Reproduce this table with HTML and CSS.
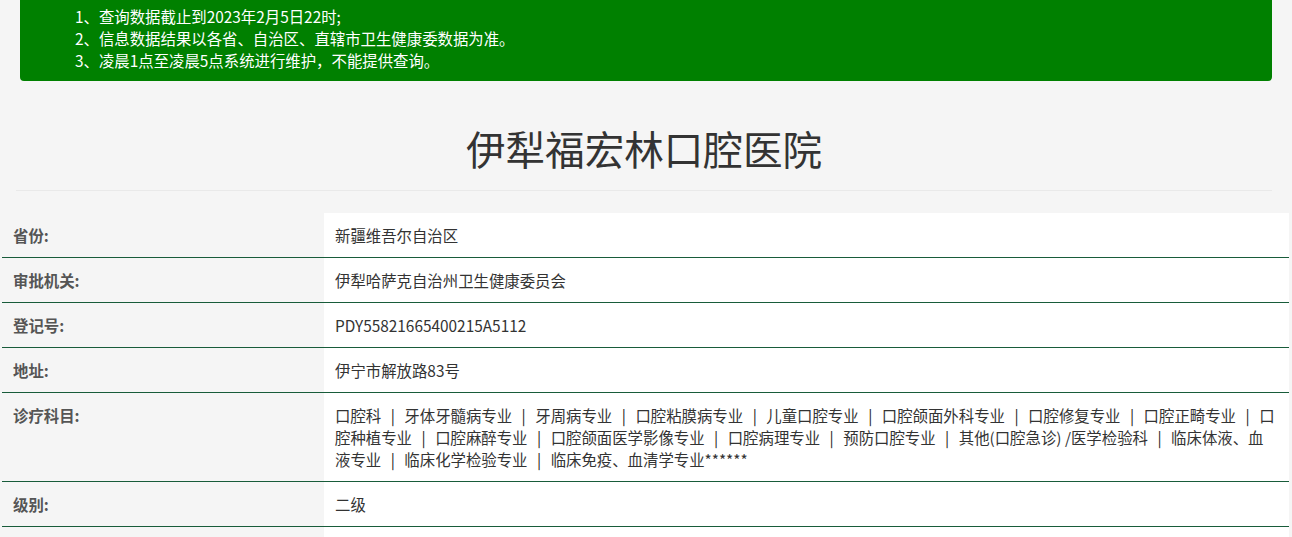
FILE: index.html
```html
<!DOCTYPE html>
<html lang="zh-CN">
<head>
<meta charset="utf-8">
<title>伊犁福宏林口腔医院</title>
<link rel="stylesheet" href="styles.css">
</head>
<body>
<div class="notice">
  <p>1、查询数据截止到2023年2月5日22时;</p>
  <p>2、信息数据结果以各省、自治区、直辖市卫生健康委数据为准。</p>
  <p>3、凌晨1点至凌晨5点系统进行维护，不能提供查询。</p>
</div>
<div class="header">
  <h1 class="title">伊犁福宏林口腔医院</h1>
</div>
<div class="info">
  <div class="row"><div class="label">省份:</div><div class="value">新疆维吾尔自治区</div></div>
  <div class="row"><div class="label">审批机关:</div><div class="value">伊犁哈萨克自治州卫生健康委员会</div></div>
  <div class="row"><div class="label">登记号:</div><div class="value">PDY55821665400215A5112</div></div>
  <div class="row"><div class="label">地址:</div><div class="value">伊宁市解放路83号</div></div>
  <div class="row"><div class="label">诊疗科目:</div><div class="value">口腔科<span class="sep">|</span>牙体牙髓病专业<span class="sep">|</span>牙周病专业<span class="sep">|</span>口腔粘膜病专业<span class="sep">|</span>儿童口腔专业<span class="sep">|</span>口腔颌面外科专业<span class="sep">|</span>口腔修复专业<span class="sep">|</span>口腔正畸专业<span class="sep">|</span>口腔种植专业<span class="sep">|</span>口腔麻醉专业<span class="sep">|</span>口腔颌面医学影像专业<span class="sep">|</span>口腔病理专业<span class="sep">|</span>预防口腔专业<span class="sep">|</span>其他(口腔急诊) /医学检验科<span class="sep">|</span>临床体液、血液专业<span class="sep">|</span>临床化学检验专业<span class="sep">|</span>临床免疫、血清学专业******</div></div>
  <div class="row"><div class="label">级别:</div><div class="value">二级</div></div>
  <div class="row"><div class="label">&nbsp;</div><div class="value">&nbsp;</div></div>
</div>
</body>
</html>
```
FILE: styles.css
```css
* { box-sizing: border-box; }
html, body { margin: 0; padding: 0; }
body {
  background: #f5f5f5;
  font-family: "Noto Sans CJK SC", "Noto Sans", sans-serif;
  color: #333;
  font-size: 15.4px;
}
.notice {
  margin: 0 20px;
  background: #008000;
  color: #fff;
  border-radius: 0 0 4px 4px;
  padding: 5px 20px 10px 55px;
  font-size: 15.4px;
  line-height: 22px;
}
.notice p { margin: 0; }
.header {
  margin: 0 20px 0 16px;
  border-bottom: 1px solid #e9e9e9;
  padding: 0 0 20px;
}
.title {
  margin: 0;
  padding-top: 45px;
  text-align: center;
  font-size: 39.6px;
  line-height: 44px;
  font-weight: normal;
  color: #333;
}
.info {
  margin: 22px 3px 0 2px;
}
.row {
  display: grid;
  grid-template-columns: 322px 1fr;
  border-bottom: 1px solid #185c3a;
}
.label, .value {
  padding: 11px 11px;
  line-height: 22px;
}
.label {
  font-weight: bold;
  color: #555;
  background: #f5f5f5;
}
.value {
  background: #fff;
  color: #333;
}
.sep {
  margin: 0 9.5px;
  color: #222;
}
```
